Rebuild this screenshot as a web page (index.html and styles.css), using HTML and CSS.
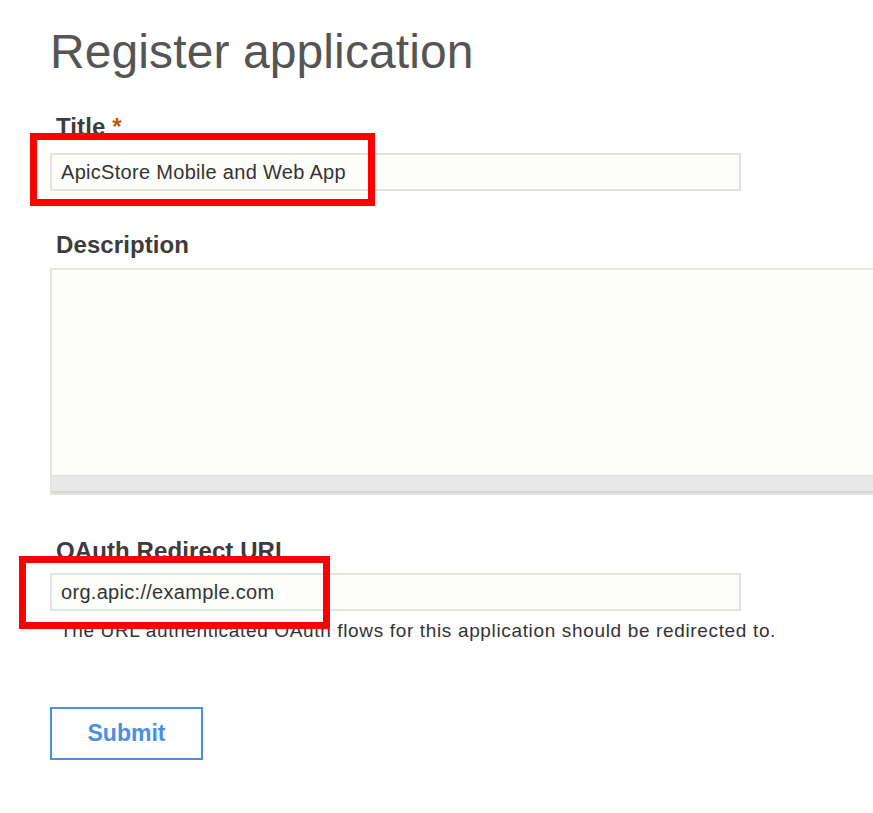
FILE: index.html
```html
<!DOCTYPE html>
<html lang="en">
<head>
<meta charset="utf-8">
<title>Register application</title>
<link rel="stylesheet" href="styles.css">
</head>
<body>
<main class="page">
  <h1 class="heading">Register application</h1>
  <form class="form">
    <div class="field field-title">
      <label class="label">Title <span class="req">*</span></label>
      <div class="input-wrap">
        <div class="input">ApicStore Mobile and Web App</div>
        <div class="mark mark-title"></div>
      </div>
    </div>
    <div class="field field-desc">
      <label class="label">Description</label>
      <div class="textarea">
        <div class="textarea-body"></div>
        <div class="textarea-strip"></div>
      </div>
    </div>
    <div class="field field-url">
      <label class="label">OAuth Redirect URL</label>
      <div class="input-wrap">
        <div class="input">org.apic://example.com</div>
        <div class="mark mark-url"></div>
      </div>
      <p class="help">The URL authenticated OAuth flows for this application should be redirected to.</p>
    </div>
    <button type="button" class="submit">Submit</button>
  </form>
</main>
</body>
</html>
```
FILE: styles.css
```css
html, body {
  margin: 0;
  padding: 0;
  background: #ffffff;
  overflow: hidden;
}
body {
  font-family: "Liberation Sans", Arial, Helvetica, sans-serif;
  color: #333;
}
.page {
  padding: 24px 0 0 50px;
}
.heading {
  margin: 0;
  font-size: 48px;
  line-height: 56px;
  font-weight: normal;
  color: #555;
  letter-spacing: 0.1px;
}
.form {
  display: flex;
  flex-direction: column;
  align-items: flex-start;
}
.field {
  display: flex;
  flex-direction: column;
  align-self: stretch;
}
.label {
  display: block;
  font-size: 24px;
  line-height: 28px;
  font-weight: bold;
  color: #3c3c3c;
  padding-left: 6px;
  letter-spacing: 0.1px;
}
.req {
  color: #c4580c;
}
.field-title {
  margin-top: 33px;
}
.field-title .label {
  margin-bottom: 12px;
}
.input-wrap {
  position: relative;
  align-self: flex-start;
}
.input {
  box-sizing: border-box;
  width: 691px;
  height: 38px;
  border: 2px solid #e4e3dd;
  background: #fdfdfb;
  padding: 0 9px;
  font-size: 20px;
  line-height: 34px;
  letter-spacing: 0.3px;
  color: #333;
}
.mark {
  position: absolute;
  border: 7px solid #ff0000;
  box-sizing: border-box;
}
.mark-title {
  left: -20px;
  top: -20px;
  width: 345px;
  height: 73px;
}
.mark-url {
  left: -31px;
  top: -17px;
  width: 311px;
  height: 73px;
}
.field-desc {
  margin-top: 40px;
}
.field-desc .label {
  margin-bottom: 9px;
}
.textarea {
  box-sizing: border-box;
  height: 227px;
  border: 2px solid #e4e3dd;
  border-right: none;
  background: #fdfdfb;
  display: flex;
  flex-direction: column;
}
.textarea-body {
  flex: 1;
}
.textarea-strip {
  height: 15px;
  background: #e8e8e8;
  border-top: 1px solid #e0dfd9;
  border-bottom: 2px solid #d6d6d6;
}
.field-url {
  margin-top: 42px;
}
.field-url .label {
  margin-bottom: 8px;
}
.help {
  margin: 9px 0 0;
  padding-left: 10px;
  font-size: 19px;
  line-height: 22px;
  letter-spacing: 0.65px;
  color: #333;
  white-space: nowrap;
}
.submit {
  margin-top: 65px;
  box-sizing: border-box;
  width: 153px;
  height: 53px;
  border: 2px solid #4a90e2;
  background: #fff;
  color: #4a90e2;
  font-family: "Liberation Sans", Arial, sans-serif;
  font-size: 23px;
  font-weight: bold;
  padding: 0;
  cursor: pointer;
}
```
